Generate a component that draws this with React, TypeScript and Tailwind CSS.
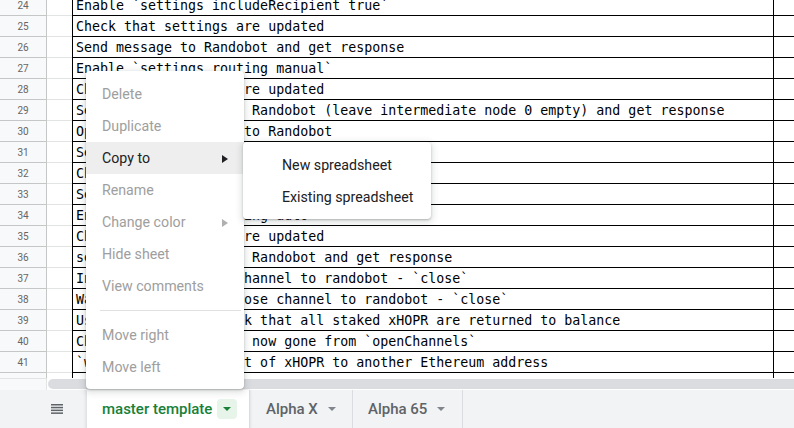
import React from "react";

const rows: [number, string][] = [
  [24, "Enable `settings includeRecipient true`"],
  [25, "Check that settings are updated"],
  [26, "Send message to Randobot and get response"],
  [27, "Enable `settings routing manual`"],
  [28, "Check that settings are updated"],
  [29, "Send a new message to Randobot (leave intermediate node 0 empty) and get response"],
  [30, "Open payment channel to Randobot"],
  [31, "Send message to Randobot and get response"],
  [32, "Check that channel is open"],
  [33, "Send message to Randobot and get response"],
  [34, "Enable `settings routing auto`"],
  [35, "Check that settings are updated"],
  [36, "send a new message to Randobot and get response"],
  [37, "Initiate closing of channel to randobot - `close`"],
  [38, "Wait 2 minutes and close channel to randobot - `close`"],
  [39, "Use `balance` to check that all staked xHOPR are returned to balance"],
  [40, "Check that channel is now gone from `openChannels`"],
  [41, "`withdraw` some amount of xHOPR to another Ethereum address"],
  [42, ""],
];

function RightArrow({ color }: { color: string }) {
  return (
    <svg width="6" height="8" viewBox="0 0 6 8">
      <path d="M0 0 L6 4 L0 8 Z" fill={color} />
    </svg>
  );
}

function DownArrow({ color }: { color: string }) {
  return (
    <svg width="8" height="4" viewBox="0 0 8 4">
      <path d="M0 0 L8 0 L4 4 Z" fill={color} />
    </svg>
  );
}

function MenuItem({
  label,
  disabled = true,
  arrow = false,
  active = false,
}: {
  label: string;
  disabled?: boolean;
  arrow?: boolean;
  active?: boolean;
}) {
  return (
    <div
      className={`flex h-[32px] items-center justify-between pl-4 pr-4 pt-px text-[14.2px] ${
        active ? "bg-[#eeeeee]" : ""
      } ${disabled ? "text-[#9e9e9e]" : "text-[#202124]"}`}
    >
      <span>{label}</span>
      {arrow && <RightArrow color={disabled ? "#b0b0b0" : "#202124"} />}
    </div>
  );
}

export default function App() {
  return (
    <div className="relative h-[428px] w-[794px] overflow-hidden bg-white font-['Roboto',sans-serif]">
      {/* grid */}
      <div className="h-[378px] overflow-hidden">
        <div className="mt-[-5px]">
          {rows.map(([n, text]) => (
            <div key={n} className="flex h-[21px]">
              <div className="flex w-[47px] shrink-0 items-center justify-center border-b border-r border-[#c4c7c5] bg-[#f8f9fa] text-[10px] text-[#666]">
                {n}
              </div>
              <div className="w-[25px] shrink-0 border-b border-[#e2e3e3]" />
              <div className="flex w-[702px] shrink-0 items-center overflow-hidden whitespace-pre border-b border-l border-r border-black pl-[3px] pt-[1px] font-['DejaVu_Sans_Mono',monospace] text-[13.3px] text-black">
                {text}
              </div>
              <div className="flex-1 border-b border-black" />
            </div>
          ))}
        </div>
      </div>

      {/* scrollbar */}
      <div className="flex h-[12px]">
        <div className="w-[47px] shrink-0 border-r border-t border-[#e2e3e3] bg-[#f8f9fa]" />
        <div className="flex-1 bg-white pt-[1px]">
          <div className="ml-[1px] h-[10px] rounded-l-full bg-[#dadce0]" />
        </div>
      </div>

      {/* tab bar */}
      <div className="flex h-[38px] bg-[#f1f3f4]">
        <div className="flex w-[87px] shrink-0 items-center pl-[51px]">
          <svg width="12" height="10" viewBox="0 0 12 10">
            <rect x="0" y="0" width="12" height="1.5" fill="#5f6368" />
            <rect x="0" y="2.8" width="12" height="1.5" fill="#5f6368" />
            <rect x="0" y="5.6" width="12" height="1.5" fill="#5f6368" />
            <rect x="0" y="8.4" width="12" height="1.5" fill="#5f6368" />
          </svg>
        </div>
        <div className="flex w-[162px] shrink-0 items-center bg-white pl-[15px] shadow-[0_1px_3px_1px_rgba(60,64,67,0.15)]">
          <span className="text-[15px] font-medium text-[#188038]">master template</span>
          <div className="ml-[5px] flex h-[20px] w-[20px] items-center justify-center rounded-sm bg-[#e6f4ea]">
            <DownArrow color="#188038" />
          </div>
        </div>
        <div className="w-px shrink-0 bg-[#dadce0]" />
        <div className="flex w-[102px] shrink-0 items-center pl-4">
          <span className="text-[15px] font-medium text-[#5f6368]">Alpha X</span>
          <div className="ml-1 flex h-[20px] w-[20px] items-center justify-center">
            <DownArrow color="#80868b" />
          </div>
        </div>
        <div className="w-px shrink-0 bg-[#dadce0]" />
        <div className="flex w-[109px] shrink-0 items-center pl-[15px]">
          <span className="text-[15px] font-medium text-[#5f6368]">Alpha 65</span>
          <div className="ml-1 flex h-[20px] w-[20px] items-center justify-center">
            <DownArrow color="#80868b" />
          </div>
        </div>
        <div className="w-px shrink-0 bg-[#dadce0]" />
      </div>

      {/* context menu */}
      <div className="absolute left-[86px] top-[71px] z-10 w-[158px] rounded bg-white pb-[6px] pt-[7px] shadow-[0_2px_6px_2px_rgba(60,64,67,0.15),0_1px_2px_0_rgba(60,64,67,0.3)]">
        <MenuItem label="Delete" />
        <MenuItem label="Duplicate" />
        <MenuItem label="Copy to" disabled={false} arrow active />
        <MenuItem label="Rename" />
        <MenuItem label="Change color" arrow />
        <MenuItem label="Hide sheet" />
        <MenuItem label="View comments" />
        <div className="my-2 ml-[14px] mr-[3px] h-px bg-[#e0e0e0]" />
        <MenuItem label="Move right" />
        <MenuItem label="Move left" />
      </div>

      {/* submenu */}
      <div className="absolute left-[243px] top-[142px] z-20 w-[188px] rounded bg-white pb-[6px] pt-[7px] shadow-[0_2px_6px_2px_rgba(60,64,67,0.15),0_1px_2px_0_rgba(60,64,67,0.3)]">
        <div className="flex h-[32px] items-center pl-[39px] pt-px text-[14.2px] text-[#202124]">New spreadsheet</div>
        <div className="flex h-[32px] items-center pl-[39px] pt-px text-[14.2px] text-[#202124]">Existing spreadsheet</div>
      </div>
    </div>
  );
}
